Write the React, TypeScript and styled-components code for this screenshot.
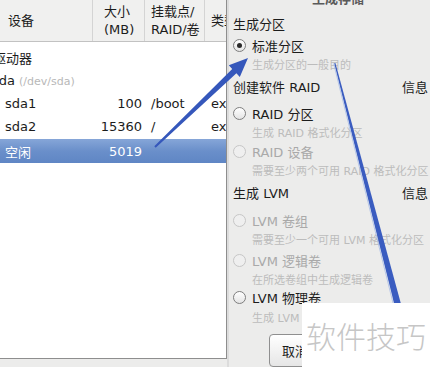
import styled, { createGlobalStyle } from "styled-components";

const GlobalStyle = createGlobalStyle`
  html, body {
    margin: 0;
    padding: 0;
    background: #ececeb;
  }
  body {
    font-family: "DejaVu Sans", "Noto Sans CJK SC", sans-serif;
    font-size: 13px;
    color: #1c1c1c;
  }
`;

const Screen = styled.div`
  position: relative;
  width: 430px;
  height: 367px;
  overflow: hidden;
  display: flex;
  background: #ececeb;
`;

// left: partition list
const ListPanel = styled.div`
  width: 226px;
  height: 358px;
  flex: none;
  background: #fff;
  border-right: 1px solid #8e8e8e;
  border-bottom: 1px solid #8e8e8e;
  display: flex;
  flex-direction: column;
  overflow: hidden;
`;

const HeaderRow = styled.div`
  height: 41px;
  display: grid;
  grid-template-columns: 93px 52px 60px 1fr;
  background: #f0f0ef;
  border-bottom: 1px solid #c2c2c2;
`;

const HeaderCell = styled.div<{ $pad: number }>`
  display: flex;
  flex-direction: column;
  justify-content: center;
  padding-left: ${(p) => p.$pad}px;
  border-right: 1px solid #d4d4d4;
  line-height: 18px;
  white-space: nowrap;
  &:last-child {
    border-right: none;
  }
`;

const Rows = styled.div`
  padding-top: 4px;
  display: flex;
  flex-direction: column;
`;

const Row = styled.div<{ $selected?: boolean }>`
  height: 23px;
  display: grid;
  grid-template-columns: 93px 52px 60px 1fr;
  align-items: center;
  white-space: nowrap;
  color: ${(p) => (p.$selected ? "#fff" : "#1c1c1c")};
  background: ${(p) =>
    p.$selected ? "linear-gradient(#86a6d8, #6a8fca 50%, #5f86c4)" : "transparent"};
  ${(p) => p.$selected && "height: 24px; margin-top: 1px;"}
`;

const TreeLabel = styled.div<{ $shift: number }>`
  grid-column: 1 / -1;
  margin-left: ${(p) => p.$shift}px;
`;

const Hint = styled.span`
  color: #b8b8b8;
  font-size: 11px;
  margin-left: 4px;
`;

const NameCell = styled.div`
  padding-left: 5px;
`;

const SizeCell = styled.div`
  text-align: right;
  padding-right: 3px;
`;

const TextCell = styled.div`
  padding-left: 6px;
  overflow: hidden;
`;

const Gutter = styled.div`
  width: 2px;
  flex: none;
  background: #dcdcdc;
`;

// right: create storage dialog
const Dialog = styled.div`
  flex: 1;
  padding-left: 4px;
  display: flex;
  flex-direction: column;
`;

const DialogTitle = styled.div`
  height: 14px;
  margin-top: -8px;
  padding-left: 79px;
  font-weight: bold;
  color: #5a5a5a;
  line-height: 14px;
`;

const Section = styled.div<{ $top: number }>`
  height: 20px;
  margin-top: ${(p) => p.$top}px;
  display: flex;
  align-items: center;
  justify-content: space-between;
  padding-right: 2px;
`;

const Option = styled.div<{ $top?: number; $disabled?: boolean }>`
  height: 20px;
  margin-top: ${(p) => p.$top ?? 0}px;
  display: flex;
  align-items: center;
  gap: 6px;
  color: ${(p) => (p.$disabled ? "#a9a9a9" : "#1c1c1c")};
`;

const Radio = styled.span<{ $checked?: boolean; $disabled?: boolean }>`
  width: 11px;
  height: 11px;
  border-radius: 50%;
  border: 1px solid ${(p) => (p.$disabled ? "#c6c6c6" : "#7e7e7e")};
  background: ${(p) =>
    p.$disabled ? "#efefef" : "linear-gradient(#ffffff, #e4e4e4)"};
  display: flex;
  align-items: center;
  justify-content: center;
  flex: none;
  &::after {
    content: "";
    width: 5px;
    height: 5px;
    border-radius: 50%;
    background: #2a2a2a;
    display: ${(p) => (p.$checked ? "block" : "none")};
  }
`;

const Sub = styled.div`
  height: 19px;
  padding-left: 19px;
  display: flex;
  align-items: center;
  font-size: 11px;
  color: #bcbcbc;
  white-space: nowrap;
`;

const CancelButton = styled.button`
  margin-top: 8px;
  margin-left: 36px;
  width: 80px;
  height: 34px;
  border: 1px solid #8f8f8f;
  border-radius: 4px;
  background: linear-gradient(#ffffff, #e6e6e6);
  font-family: inherit;
  font-size: 13px;
  color: #1c1c1c;
  text-align: left;
  padding: 0 0 0 12px;
`;

const Arrows = styled.svg`
  position: absolute;
  left: 0;
  top: 0;
  pointer-events: none;
`;

const Watermark = styled.div`
  position: absolute;
  left: 302px;
  top: 303px;
  width: 128px;
  height: 64px;
  background: #fff;
  display: flex;
  align-items: center;
  padding-left: 4px;
  box-sizing: border-box;
  font-family: "Noto Sans CJK SC", sans-serif;
  font-size: 30px;
  font-weight: 300;
  color: #c6c6c6;
  letter-spacing: 0px;
`;

const parts = [
  { name: "sda1", size: "100", mount: "/boot", type: "ex" },
  { name: "sda2", size: "15360", mount: "/", type: "ex" },
];

export default function App() {
  return (
    <>
      <GlobalStyle />
      <Screen>
        <ListPanel>
          <HeaderRow>
            <HeaderCell $pad={8}>设备</HeaderCell>
            <HeaderCell $pad={11}>
              <span>大小</span>
              <span>(MB)</span>
            </HeaderCell>
            <HeaderCell $pad={6}>
              <span>挂载点/</span>
              <span>RAID/卷</span>
            </HeaderCell>
            <HeaderCell $pad={6}>类型</HeaderCell>
          </HeaderRow>
          <Rows>
            <Row>
              <TreeLabel $shift={-7}>驱动器</TreeLabel>
            </Row>
            <Row>
              <TreeLabel $shift={-8}>
                sda<Hint>(/dev/sda)</Hint>
              </TreeLabel>
            </Row>
            {parts.map((p) => (
              <Row key={p.name}>
                <NameCell>{p.name}</NameCell>
                <SizeCell>{p.size}</SizeCell>
                <TextCell>{p.mount}</TextCell>
                <TextCell>{p.type}</TextCell>
              </Row>
            ))}
            <Row $selected>
              <NameCell>空闲</NameCell>
              <SizeCell>5019</SizeCell>
              <TextCell />
              <TextCell />
            </Row>
          </Rows>
        </ListPanel>
        <Gutter />
        <Dialog>
          <DialogTitle>生成存储</DialogTitle>
          <Section $top={8}>生成分区</Section>
          <Option $top={2}>
            <Radio $checked />
            标准分区
          </Option>
          <Sub>生成分区的一般目的</Sub>
          <Section $top={4}>
            <span>创建软件 RAID</span>
            <span>信息</span>
          </Section>
          <Option $top={7}>
            <Radio />
            RAID 分区
          </Option>
          <Sub>生成 RAID 格式化分区</Sub>
          <Option $disabled>
            <Radio $disabled />
            RAID 设备
          </Option>
          <Sub>需要至少两个可用 RAID 格式化分区</Sub>
          <Section $top={4}>
            <span>生成 LVM</span>
            <span>信息</span>
          </Section>
          <Option $top={8} $disabled>
            <Radio $disabled />
            LVM 卷组
          </Option>
          <Sub>需要至少一个可用 LVM 格式化分区</Sub>
          <Option $top={2} $disabled>
            <Radio $disabled />
            LVM 逻辑卷
          </Option>
          <Sub>在所选卷组中生成逻辑卷</Sub>
          <Option>
            <Radio />
            LVM 物理卷
          </Option>
          <Sub>生成 LVM 格式化分区</Sub>
          <CancelButton>取消</CancelButton>
        </Dialog>

        <Arrows width="430" height="367" viewBox="0 0 430 367">
          <polygon
            points="154.3,146.3 232.2,68.9 228.8,65.3 248,58 239.8,76.9 236.4,73.3 155.7,147.7"
            fill="#3557bb"
          />
          <polygon points="334.2,63.2 335.4,62.9 401,304 394.6,305.6" fill="#3a5cc0" />
          <line x1="333.6" y1="63.4" x2="393.6" y2="305.4" stroke="#a8bde8" strokeWidth="0.8" />
        </Arrows>
        <Watermark>软件技巧</Watermark>
      </Screen>
    </>
  );
}
